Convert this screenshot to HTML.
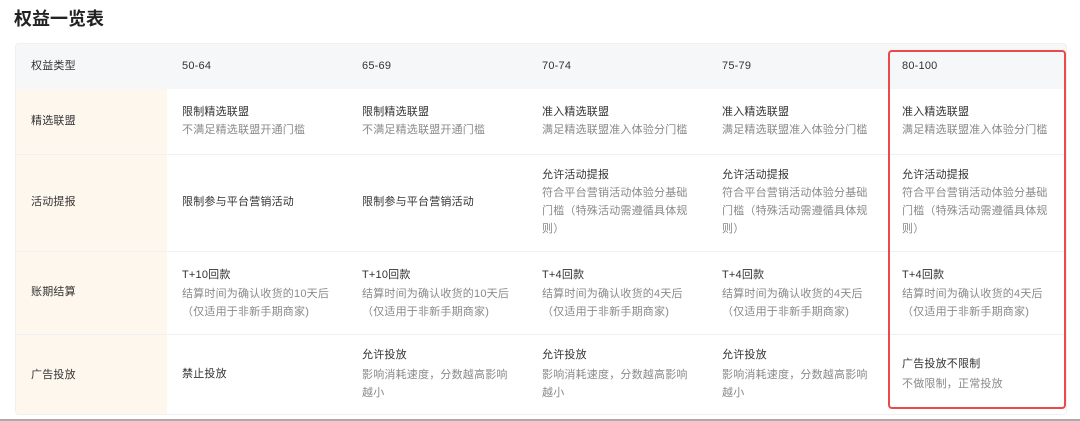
<!DOCTYPE html>
<html><head><meta charset="utf-8"><style>
*{margin:0;padding:0;box-sizing:border-box}
body{width:1080px;height:421px;background:#fff;position:relative;overflow:hidden;font-family:"Liberation Sans","Noto Sans CJK SC",sans-serif}
.t{position:absolute;white-space:nowrap;font-size:11px;line-height:18px;letter-spacing:.2px}
.h{color:#333}.s{color:#8a8a8a}
h1{position:absolute;left:14px;top:5px;font-size:18px;font-weight:bold;color:#222}
.card{position:absolute;left:15px;top:43px;width:1052px;height:372px;border:1px solid #eef0f2;border-radius:4px;overflow:hidden}
.hd{position:absolute;left:0;top:0;width:100%;height:45px;background:#f6f7f9}
.lc{position:absolute;left:0;top:45px;width:151px;height:327px;background:#fef7ee}
.ln{position:absolute;left:0;width:100%;height:1px;background:#eef1f3}
.red{position:absolute;left:888px;top:50px;width:178px;height:359px;border:2px solid #ec4a4a;border-radius:4px}
.bot{position:absolute;left:0;top:419px;width:1080px;height:2px;background:#aaa}
</style></head><body>
<h1>权益一览表</h1>
<div class="card"><div class="hd"></div><div class="lc"></div>
<div class="ln" style="top:110px"></div><div class="ln" style="top:207px"></div><div class="ln" style="top:290px"></div></div>
<div class="t h" style="left:31px;top:57px">权益类型</div>
<div class="t h" style="left:182px;top:57px">50-64</div>
<div class="t h" style="left:362px;top:57px">65-69</div>
<div class="t h" style="left:542px;top:57px">70-74</div>
<div class="t h" style="left:722px;top:57px">75-79</div>
<div class="t h" style="left:902px;top:57px">80-100</div>

<div class="t h" style="left:31px;top:112px">精选联盟</div>
<div class="t h" style="left:31px;top:193px">活动提报</div>
<div class="t h" style="left:31px;top:283px">账期结算</div>
<div class="t h" style="left:31px;top:366px">广告投放</div>

<div class="t h" style="left:182px;top:103px">限制精选联盟</div><div class="t s" style="left:182px;top:121px">不满足精选联盟开通门槛</div>
<div class="t h" style="left:362px;top:103px">限制精选联盟</div><div class="t s" style="left:362px;top:121px">不满足精选联盟开通门槛</div>
<div class="t h" style="left:542px;top:103px">准入精选联盟</div><div class="t s" style="left:542px;top:121px">满足精选联盟准入体验分门槛</div>
<div class="t h" style="left:722px;top:103px">准入精选联盟</div><div class="t s" style="left:722px;top:121px">满足精选联盟准入体验分门槛</div>
<div class="t h" style="left:902px;top:103px">准入精选联盟</div><div class="t s" style="left:902px;top:121px">满足精选联盟准入体验分门槛</div>

<div class="t h" style="left:182px;top:193px">限制参与平台营销活动</div>
<div class="t h" style="left:362px;top:193px">限制参与平台营销活动</div>
<div class="t h" style="left:542px;top:166px">允许活动提报</div><div class="t s" style="left:542px;top:184px;line-height:18px">符合平台营销活动体验分基础<br>门槛（特殊活动需遵循具体规<br>则）</div>
<div class="t h" style="left:722px;top:166px">允许活动提报</div><div class="t s" style="left:722px;top:184px">符合平台营销活动体验分基础<br>门槛（特殊活动需遵循具体规<br>则）</div>
<div class="t h" style="left:902px;top:166px">允许活动提报</div><div class="t s" style="left:902px;top:184px">符合平台营销活动体验分基础<br>门槛（特殊活动需遵循具体规<br>则）</div>

<div class="t h" style="left:182px;top:266px">T+10回款</div><div class="t s" style="left:182px;top:285px">结算时间为确认收货的10天后<br>（仅适用于非新手期商家)</div>
<div class="t h" style="left:362px;top:266px">T+10回款</div><div class="t s" style="left:362px;top:285px">结算时间为确认收货的10天后<br>（仅适用于非新手期商家)</div>
<div class="t h" style="left:542px;top:266px">T+4回款</div><div class="t s" style="left:542px;top:285px">结算时间为确认收货的4天后<br>（仅适用于非新手期商家)</div>
<div class="t h" style="left:722px;top:266px">T+4回款</div><div class="t s" style="left:722px;top:285px">结算时间为确认收货的4天后<br>（仅适用于非新手期商家)</div>
<div class="t h" style="left:902px;top:266px">T+4回款</div><div class="t s" style="left:902px;top:285px">结算时间为确认收货的4天后<br>（仅适用于非新手期商家)</div>

<div class="t h" style="left:182px;top:365px">禁止投放</div>
<div class="t h" style="left:362px;top:346px">允许投放</div><div class="t s" style="left:362px;top:366px">影响消耗速度，分数越高影响<br>越小</div>
<div class="t h" style="left:542px;top:346px">允许投放</div><div class="t s" style="left:542px;top:366px">影响消耗速度，分数越高影响<br>越小</div>
<div class="t h" style="left:722px;top:346px">允许投放</div><div class="t s" style="left:722px;top:366px">影响消耗速度，分数越高影响<br>越小</div>
<div class="t h" style="left:902px;top:355px">广告投放不限制</div><div class="t s" style="left:902px;top:375px">不做限制，正常投放</div>
<div class="red"></div>
<div class="bot"></div>
</body></html>
